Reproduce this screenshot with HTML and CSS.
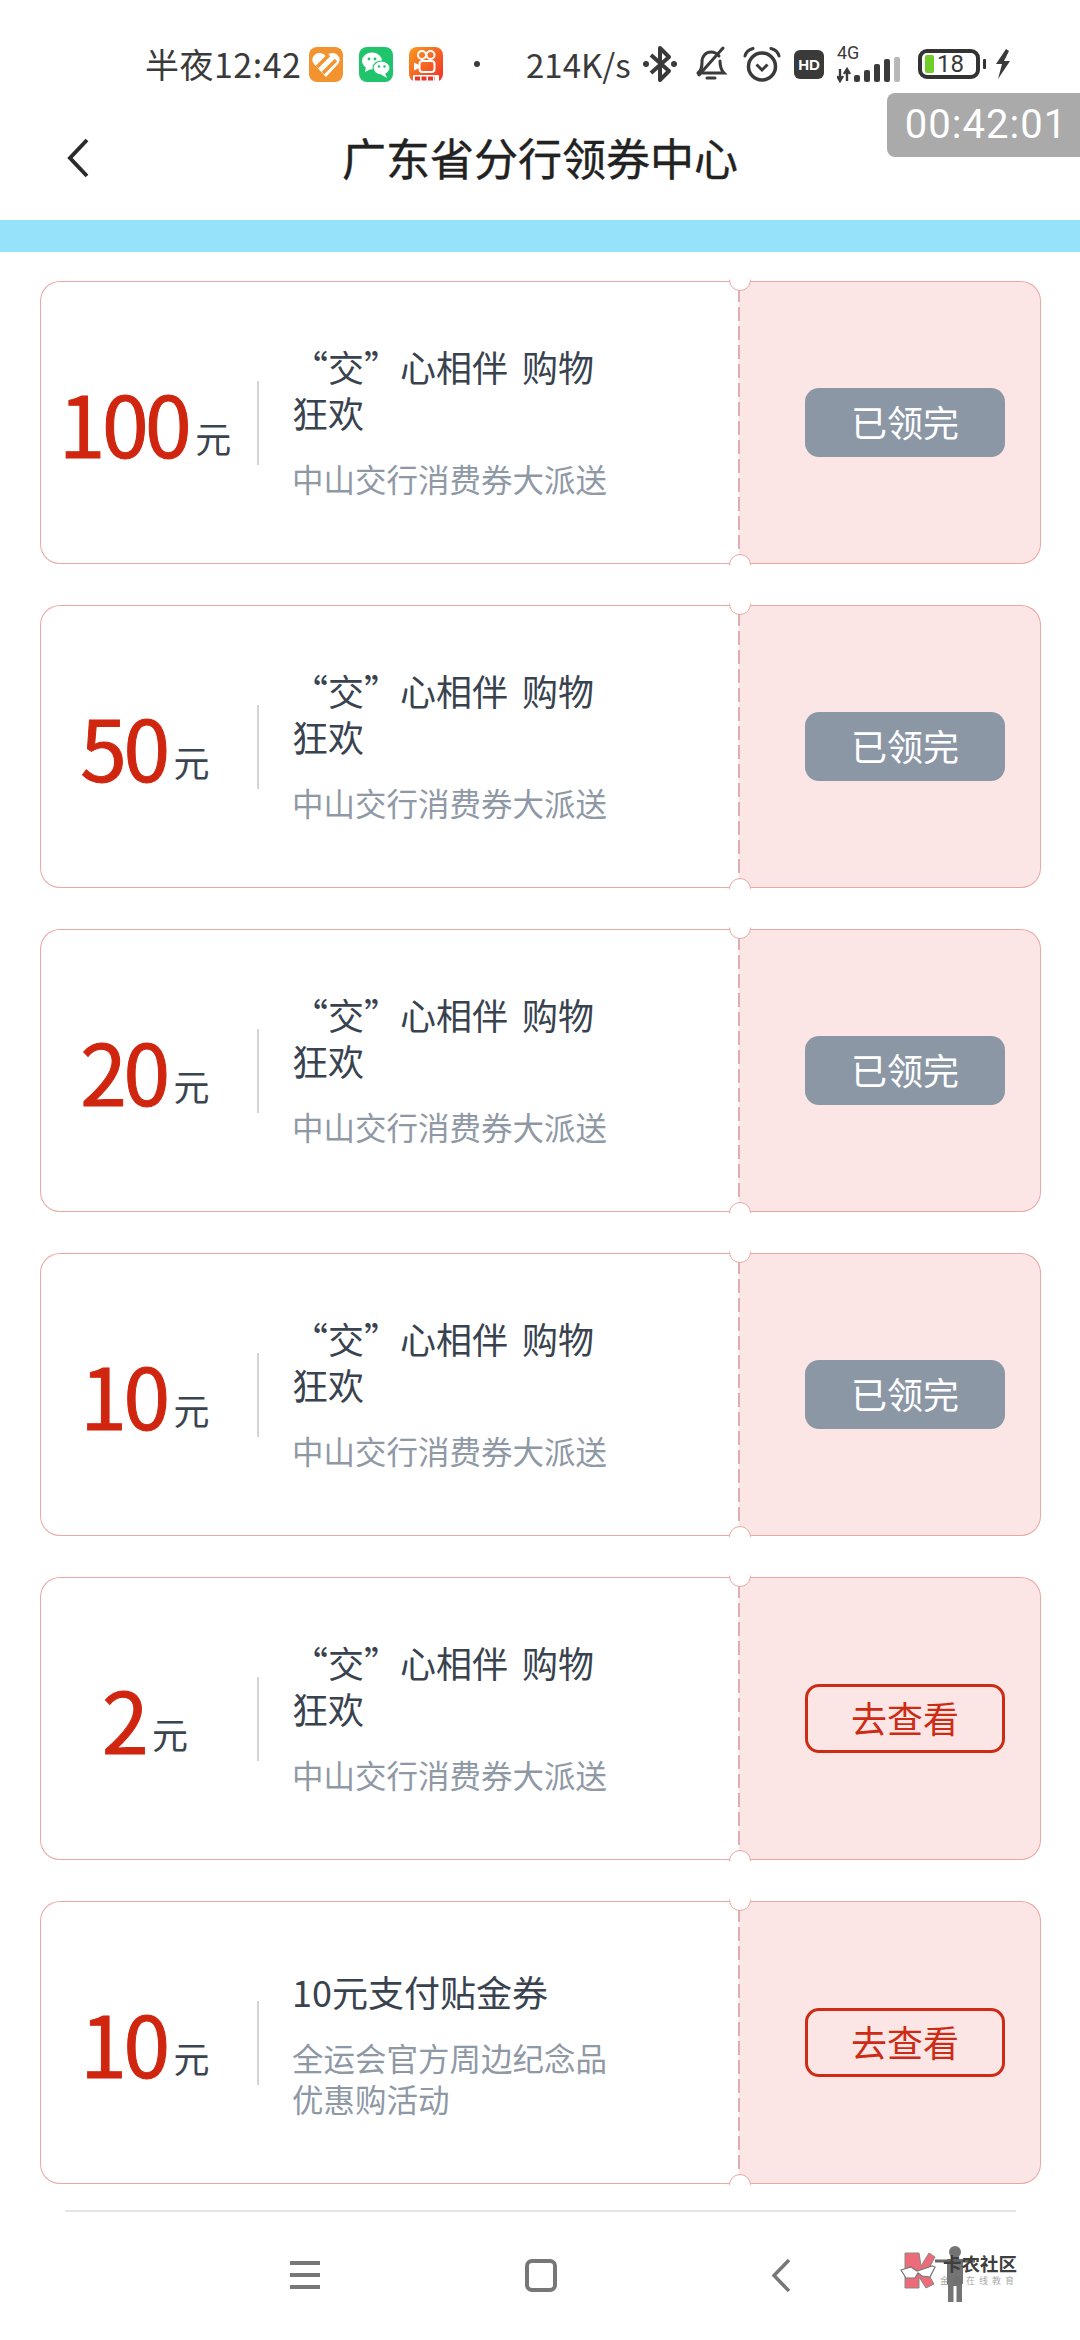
FILE: index.html
```html
<!DOCTYPE html>
<html lang="zh-CN">
<head>
<meta charset="utf-8">
<title>广东省分行领券中心</title>
<link rel="stylesheet" href="styles.css">
</head>
<body>
<div class="page">
  <div class="statusbar">
    <span class="st-time">半夜12:42</span>
    <svg class="ic-app" viewBox="0 0 34 35"><rect width="34" height="35" rx="8" fill="#f3932f"/><path d="M17 30 L5 17 C1 12 5 6 10.500 6 C13.500 6 15.500 7.500 17 9.500 C18.500 7.500 20.500 6 23.500 6 C29 6 33 12 29 17Z" fill="#fff"/><path d="M8 20 L20 8 M14 26 L27 13" stroke="#f3932f" stroke-width="3.500"/></svg>
    <svg class="ic-app" viewBox="0 0 34 35"><rect width="34" height="35" rx="8" fill="#1fc46c"/><ellipse cx="13" cy="14" rx="10" ry="8.500" fill="#fff"/><path d="M7 20 L6 25 L12 22Z" fill="#fff"/><ellipse cx="22.500" cy="21" rx="8.500" ry="7" fill="#fff" stroke="#1fc46c" stroke-width="1.200"/><path d="M26 26 L28 31 L22 27.500Z" fill="#fff"/><circle cx="10" cy="12" r="1.400" fill="#1fc46c"/><circle cx="16" cy="12" r="1.400" fill="#1fc46c"/><circle cx="20" cy="19.500" r="1.200" fill="#1fc46c"/><circle cx="25.500" cy="19.500" r="1.200" fill="#1fc46c"/></svg>
    <svg class="ic-app" viewBox="0 0 34 35"><defs><linearGradient id="ks" x1="0" y1="0" x2="1" y2="1"><stop offset="0" stop-color="#fb9a1e"/><stop offset="1" stop-color="#ee2f2c"/></linearGradient></defs><rect width="34" height="35" rx="8" fill="url(#ks)"/><circle cx="13" cy="8" r="4" fill="none" stroke="#fff" stroke-width="2"/><circle cx="21.500" cy="8" r="4" fill="none" stroke="#fff" stroke-width="2"/><rect x="10.500" y="14" width="15" height="11" rx="3" fill="none" stroke="#fff" stroke-width="2"/><path d="M10 18 L5 15.500 V23.500 L10 21Z" fill="#fff"/><rect x="4" y="28" width="26" height="7" rx="1" fill="#fff"/><path d="M6 31.500 H26" stroke="#e8382a" stroke-width="4" stroke-dasharray="5 1.500"/></svg>
    <span class="st-dot"></span>
    <span class="st-speed">214K/s</span>
    <svg class="ic-bt" viewBox="0 0 34 38"><path d="M8 10 L26 26 L17 35 V3 L26 12 L8 28" fill="none" stroke="#3a3a3a" stroke-width="4" stroke-linejoin="round"/><circle cx="3" cy="19" r="3" fill="#3a3a3a"/><circle cx="31" cy="19" r="3" fill="#3a3a3a"/></svg>
    <svg class="ic-bell" viewBox="0 0 34 36"><path d="M4 27 C8 24 8 20 8 16 C8 10 12 6 17 6 C20 6 23 7.500 25 10 M26 15 C26 20 27 24 30 27 H8" fill="none" stroke="#3a3a3a" stroke-width="3" stroke-linecap="round"/><path d="M13 32 H21" stroke="#3a3a3a" stroke-width="3" stroke-linecap="round"/><path d="M5 29 L29 2" stroke="#3a3a3a" stroke-width="3" stroke-linecap="round"/></svg>
    <svg class="ic-alarm" viewBox="0 0 38 35"><circle cx="19" cy="19.500" r="13.500" fill="none" stroke="#3a3a3a" stroke-width="3.500"/><path d="M13.500 17.500 L19 23 L24.500 17.500" fill="none" stroke="#3a3a3a" stroke-width="3"/><path d="M2 9 C3 5 6 2.500 10 1.500 M36 9 C35 5 32 2.500 28 1.500" fill="none" stroke="#3a3a3a" stroke-width="3" stroke-linecap="round"/></svg>
    <span class="ic-hd">HD</span>
    <span class="sig">
      <span class="sig-4g">4G</span>
      <svg class="sig-bars" viewBox="0 0 66 26"><path d="M3 12 V24 M0 19 L3 24 L6 19" fill="none" stroke="#3a3a3a" stroke-width="2.400"/><path d="M10 24 V12 M7 17 L10 12 L13 17" fill="none" stroke="#3a3a3a" stroke-width="2.400"/><rect x="17" y="18" width="6" height="7" rx="2" fill="#3a3a3a"/><rect x="27" y="13" width="6" height="12" rx="2" fill="#3a3a3a"/><rect x="37" y="7" width="6" height="18" rx="2" fill="#3a3a3a"/><rect x="47" y="2" width="6" height="23" rx="2" fill="#3a3a3a"/><rect x="57" y="0" width="6" height="25" rx="2" fill="#b8b8b8"/></svg>
    </span>
    <span class="batt"><span class="batt-fill"></span><span class="batt-num">18</span></span>
    <span class="batt-nub"></span>
    <svg class="ic-bolt" viewBox="0 0 17 30"><path d="M12 0 L2 15 H8 L4 30 L16 12 H10 L15 2Z" fill="#3a3a3a"/></svg>
  </div>

  <header class="appbar">
    <svg class="back" viewBox="0 0 24 40"><path d="M21 2 L4 20 L21 38" fill="none" stroke="#2b2b2b" stroke-width="4"/></svg>
    <h1 class="title">广东省分行领券中心</h1>
  </header>

  <div class="strip"></div>

  <main class="list">
    <article class="coupon">
      <div class="main">
        <div class="amount"><span class="num">100</span><span class="unit">元</span></div>
        <div class="info"><div class="name">“交”心相伴 购物狂欢</div><div class="desc">中山交行消费券大派送</div></div>
      </div>
      <div class="stub"><span class="btn btn-off">已领完</span></div>
    </article>
    <article class="coupon">
      <div class="main">
        <div class="amount"><span class="num">50</span><span class="unit">元</span></div>
        <div class="info"><div class="name">“交”心相伴 购物狂欢</div><div class="desc">中山交行消费券大派送</div></div>
      </div>
      <div class="stub"><span class="btn btn-off">已领完</span></div>
    </article>
    <article class="coupon">
      <div class="main">
        <div class="amount"><span class="num">20</span><span class="unit">元</span></div>
        <div class="info"><div class="name">“交”心相伴 购物狂欢</div><div class="desc">中山交行消费券大派送</div></div>
      </div>
      <div class="stub"><span class="btn btn-off">已领完</span></div>
    </article>
    <article class="coupon">
      <div class="main">
        <div class="amount"><span class="num">10</span><span class="unit">元</span></div>
        <div class="info"><div class="name">“交”心相伴 购物狂欢</div><div class="desc">中山交行消费券大派送</div></div>
      </div>
      <div class="stub"><span class="btn btn-off">已领完</span></div>
    </article>
    <article class="coupon">
      <div class="main">
        <div class="amount"><span class="num">2</span><span class="unit">元</span></div>
        <div class="info"><div class="name">“交”心相伴 购物狂欢</div><div class="desc">中山交行消费券大派送</div></div>
      </div>
      <div class="stub"><span class="btn btn-on">去查看</span></div>
    </article>
    <article class="coupon">
      <div class="main">
        <div class="amount"><span class="num">10</span><span class="unit">元</span></div>
        <div class="info info-last"><div class="name">10元支付贴金券</div><div class="desc">全运会官方周边纪念品优惠购活动</div></div>
      </div>
      <div class="stub"><span class="btn btn-on">去查看</span></div>
    </article>
  </main>

  <div class="rule"></div>

  <nav class="navbar">
    <svg class="nav-menu" viewBox="0 0 30 28"><path d="M0 2 H30 M0 14 H30 M0 26 H30" stroke="#777" stroke-width="4"/></svg>
    <svg class="nav-home" viewBox="0 0 32 33"><rect x="2" y="2" width="28" height="29" rx="5" fill="none" stroke="#777" stroke-width="4"/></svg>
    <svg class="nav-back" viewBox="0 0 20 33"><path d="M18 1 L3 16.500 L18 32" fill="none" stroke="#777" stroke-width="3.500"/></svg>
  </nav>

  <div class="timer">00:42:01</div>

  <div class="mark">
    <svg class="mark-logo" viewBox="0 0 125 62">
      <path d="M5 7 H19 L21 20 L29 7 L35 11 L27 26 L34 38 L26 42 L19 31 V42 H5Z" fill="#ee6b7a" stroke="#888" stroke-width="1"/>
      <path d="M1 24 L11 21 L17 25 L32 20 L35 21 L30 31 L22 30 L18 27 L15 32 L6 32Z" fill="#fff" stroke="#777" stroke-width="1.200"/>
    </svg>
    <div class="mark-sub">金融在线教育</div>
    <svg class="mark-person" viewBox="0 0 125 62">
      <circle cx="55" cy="6" r="6" fill="#666"/>
      <path d="M47 13 H63 V38 H62 V56 H56.500 V40 H53.500 V56 H48 V38 H47Z" fill="#666"/>
      <path d="M35 15 H75" stroke="#555" stroke-width="3"/>
    </svg>
    <div class="mark-name">卡农社区</div>
  </div>
</div>
</body>
</html>
```

FILE: styles.css
```css
* { box-sizing: border-box; }
html, body { margin: 0; padding: 0; background: #fff; }
body { font-family: "Noto Sans CJK SC", "Noto Sans", sans-serif; }
.page { position: relative; width: 1080px; height: 2340px; overflow: hidden; background: #fff; }

/* status bar */
.statusbar { display: flex; align-items: center; height: 38px; margin-top: 45px; padding-left: 145px; color: #3a3a3a; }
.st-time { font-size: 34px; line-height: 38px; letter-spacing: 0.5px; width: 164px; white-space: nowrap; }
.ic-app { width: 34px; height: 35px; margin-right: 16px; flex: none; }
.st-dot { width: 6px; height: 6px; border-radius: 50%; background: #3a3a3a; margin: 0 0 0 15px; }
.st-speed { font-size: 33px; line-height: 38px; margin-left: 46px; width: 117px; white-space: nowrap; }
.ic-bt { width: 34px; height: 38px; flex: none; }
.ic-bell { width: 34px; height: 36px; margin-left: 17px; flex: none; }
.ic-alarm { width: 38px; height: 35px; margin-left: 15px; flex: none; }
.ic-hd { width: 30px; height: 29px; margin-left: 13px; background: #3a3a3a; color: #fff; border-radius: 6px; font-family: "Liberation Sans", sans-serif; font-weight: 700; font-size: 15px; line-height: 29px; text-align: center; flex: none; }
.sig { position: relative; display: block; width: 66px; height: 36px; margin-left: 13px; flex: none; }
.sig-4g { position: absolute; left: 0; top: -2px; font-family: "Roboto", sans-serif; font-size: 18px; line-height: 18px; color: #3a3a3a; }
.sig-bars { position: absolute; left: 0; bottom: -1px; width: 66px; height: 26px; }
.batt { position: relative; display: flex; align-items: center; width: 62px; height: 30px; margin-left: 15px; border: 4px solid #333; border-radius: 9px; flex: none; }
.batt-fill { width: 9px; height: 18px; margin-left: 3px; border-radius: 2px; background: #72cc29; }
.batt-num { margin-left: 3px; font-family: "Roboto", sans-serif; font-size: 24px; line-height: 22px; color: #3a3a3a; }
.batt-nub { width: 3px; height: 10px; margin-left: 3px; background: #333; border-radius: 1px; flex: none; }
.ic-bolt { width: 17px; height: 30px; margin-left: 8px; flex: none; }

/* app bar */
.appbar { position: relative; display: flex; align-items: center; justify-content: center; height: 137px; padding-top: 10px; }
.title { margin: 0; font-size: 44px; line-height: 60px; font-weight: 400; color: #222; -webkit-text-stroke: 0.4px #222; }
.back { position: absolute; left: 66px; top: 55px; width: 24px; height: 40px; }
.strip { height: 32px; background: #94e3fb; }

/* coupons */
.list { display: flex; flex-direction: column; gap: 41px; padding: 29px 39px 0 40px; }
.coupon { position: relative; display: flex; height: 283px; }
.main { flex: 1; display: flex; align-items: center; border: 1.5px solid #eba7a4; border-right: 0; border-radius: 20px 0 0 20px; background: #fff; }
.amount { width: 218px; height: 84px; flex: none; display: flex; align-items: baseline; justify-content: center; padding-right: 8px; border-right: 2px solid #d4d4d4; position: relative; }
.num { font-size: 84px; line-height: 84px; letter-spacing: -3.5px; color: #d0260f; -webkit-text-stroke: 1px #d0260f; position: relative; top: -1px; }
.unit { font-size: 36px; line-height: 84px; color: #3b4550; margin-left: 7px; position: relative; top: -6px; }
.info { width: 330px; padding-left: 33px; margin-top: -4px; }
.info-last { margin-top: 1px; }
.name { width: 320px; font-size: 36px; line-height: 46px; word-spacing: 6px; color: #39434f; }
.desc { width: 320px; margin-top: 23px; font-size: 31.5px; line-height: 41px; color: #8f99a6; }
.stub { position: relative; width: 302px; flex: none; display: flex; align-items: center; justify-content: flex-end; padding-right: 35px; background: #fce6e5; border: 1.5px solid #eba7a4; border-left: 0; border-radius: 0 20px 20px 0; }
.stub::before { content: ""; position: absolute; left: -1px; top: 6px; bottom: 6px; width: 2px; background: repeating-linear-gradient(to bottom, #dfaeb4 0 14px, transparent 14px 19px); }
.stub::after { content: ""; position: absolute; left: -10px; top: -13.5px; width: 20px; height: 20px; border-radius: 50%; background: #fff; border: 1.5px solid #eba7a4; clip-path: inset(11px -1px -1px -1px); }
.coupon::after { content: ""; position: absolute; left: 689px; bottom: -12px; width: 20px; height: 20px; border-radius: 50%; background: #fff; border: 1.5px solid #eba7a4; clip-path: inset(-1px -1px 11px -1px); }
.btn { width: 200px; height: 69px; padding-bottom: 4px; display: flex; align-items: center; justify-content: center; border-radius: 14px; font-size: 36px; line-height: 1; }
.btn-off { background: #8c97a6; color: #fff; }
.btn-on { border: 3px solid #cc2c15; color: #cc2c15; }

/* bottom */
.rule { height: 2px; margin: 26px 64px 0 65px; background: #e6e6e6; }
.navbar { position: relative; display: flex; padding: 47px 0 0 290px; }
.nav-menu { width: 30px; height: 28px; margin-top: 2px; }
.nav-home { width: 32px; height: 33px; margin-left: 205px; }
.nav-back { width: 20px; height: 33px; margin-left: 214px; }

/* overlays */
.timer { position: absolute; left: 887px; top: 93px; width: 193px; height: 64px; padding-left: 5px; border-radius: 8px 0 0 8px; background: #aaa; color: #fff; font-family: "Roboto", sans-serif; font-size: 40px; line-height: 64px; letter-spacing: 1px; text-align: center; }
.mark { position: absolute; left: 900px; top: 2246px; width: 125px; height: 62px; }
.mark-logo, .mark-person { position: absolute; left: 0; top: 0; width: 125px; height: 62px; }
.mark-person { opacity: 0.9; }
.mark-name { position: absolute; left: 43px; top: 5px; font-size: 18.5px; line-height: 24px; font-weight: 700; color: #3f3f3f; white-space: nowrap; }
.mark-sub { position: absolute; left: 40px; top: 28px; font-size: 9px; line-height: 14px; letter-spacing: 4px; color: #aaa; white-space: nowrap; }
```
